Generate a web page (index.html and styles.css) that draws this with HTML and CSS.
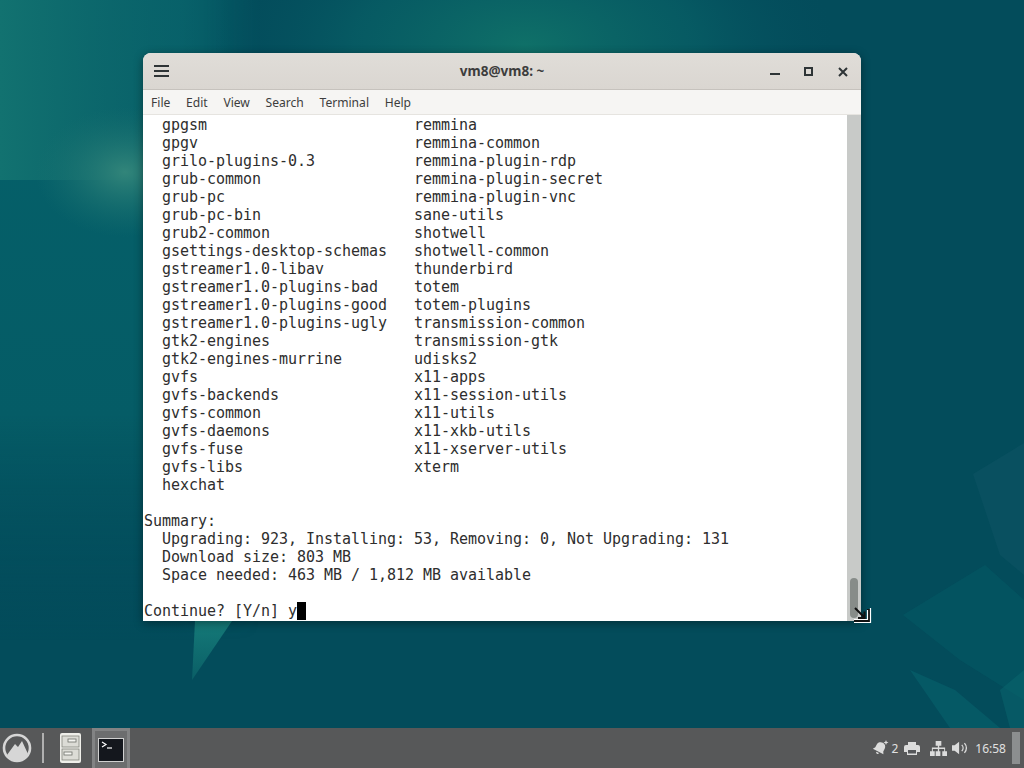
FILE: index.html
```html
<!DOCTYPE html>
<html lang="en">
<head>
<meta charset="utf-8">
<title>vm8@vm8: ~</title>
<link rel="stylesheet" href="styles.css">
</head>
<body>
<div class="desktop">
  <svg class="wallpaper" width="1024" height="728" viewBox="0 0 1024 728">
    <defs>
      <linearGradient id="leftFade" x1="0" y1="0" x2="0" y2="1">
        <stop offset="0" stop-color="#05616a"/>
        <stop offset="0.65" stop-color="#055c66"/>
        <stop offset="1" stop-color="#034c5c" stop-opacity="0"/>
      </linearGradient>
      <linearGradient id="leftSide" x1="0" y1="0" x2="1" y2="0">
        <stop offset="0" stop-color="#fff" />
        <stop offset="0.7" stop-color="#fff" />
        <stop offset="1" stop-color="#000" />
      </linearGradient>
      <mask id="leftMask"><rect width="260" height="640" fill="url(#leftSide)"/></mask>
      <linearGradient id="leftTeal" x1="0" y1="0" x2="1" y2="0">
        <stop offset="0" stop-color="#127270"/>
        <stop offset="0.8" stop-color="#0a6169" stop-opacity=".55"/>
        <stop offset="1" stop-color="#0a6169" stop-opacity="0"/>
      </linearGradient>
      <radialGradient id="topGlow">
        <stop offset="0" stop-color="#0f7068"/>
        <stop offset="0.55" stop-color="#086066" stop-opacity=".7"/>
        <stop offset="1" stop-color="#045060" stop-opacity="0"/>
      </radialGradient>
      <radialGradient id="leftGlow">
        <stop offset="0" stop-color="#32857a"/>
        <stop offset="1" stop-color="#17706f" stop-opacity="0"/>
      </radialGradient>
      <linearGradient id="shard" x1="0" y1="0" x2="0" y2="1">
        <stop offset="0" stop-color="#157a78"/>
        <stop offset="1" stop-color="#0a5e66"/>
      </linearGradient>
    </defs>
    <rect width="1024" height="728" fill="#034c5b"/>
    <rect width="260" height="640" fill="url(#leftFade)" mask="url(#leftMask)"/>
    <rect width="230" height="180" fill="url(#leftTeal)"/>
    <ellipse cx="125" cy="172" rx="90" ry="65" fill="url(#leftGlow)"/>
    <ellipse cx="525" cy="45" rx="310" ry="160" fill="url(#topGlow)"/>
    <polygon points="973,474 1024,443 1024,575 1000,555" fill="#0e5464" opacity=".55"/>
    <polygon points="903,615 985,565 1024,600 1024,700 960,660" fill="#05606a" opacity=".4"/>
    <polygon points="910,670 955,690 1000,728 950,728" fill="#086670" opacity=".5"/>
    <polygon points="1000,690 1024,670 1024,728 1010,728" fill="#0a6a70" opacity=".45"/>
    <polygon points="195,621 232,621 192,680" fill="url(#shard)"/>
  </svg>

  <section class="window">
    <header class="titlebar">
      <span class="hamburger"><i></i><i></i><i></i></span>
      <h1 class="title">vm8@vm8: ~</h1>
      <div class="controls">
        <svg width="14" height="14" viewBox="0 0 14 14"><rect x="2" y="8" width="10" height="2" fill="#2e3436"/></svg>
        <svg width="14" height="14" viewBox="0 0 14 14"><rect x="3" y="3" width="7" height="7" fill="none" stroke="#2e3436" stroke-width="2"/></svg>
        <svg width="14" height="14" viewBox="0 0 14 14"><path d="M3 3l8 8M11 3l-8 8" stroke="#2e3436" stroke-width="2"/></svg>
      </div>
    </header>
    <nav class="menubar">
      <span>File</span><span>Edit</span><span>View</span><span>Search</span><span>Terminal</span><span>Help</span>
    </nav>
    <div class="terminal">
      <pre class="output">  gpgsm                       remmina
  gpgv                        remmina-common
  grilo-plugins-0.3           remmina-plugin-rdp
  grub-common                 remmina-plugin-secret
  grub-pc                     remmina-plugin-vnc
  grub-pc-bin                 sane-utils
  grub2-common                shotwell
  gsettings-desktop-schemas   shotwell-common
  gstreamer1.0-libav          thunderbird
  gstreamer1.0-plugins-bad    totem
  gstreamer1.0-plugins-good   totem-plugins
  gstreamer1.0-plugins-ugly   transmission-common
  gtk2-engines                transmission-gtk
  gtk2-engines-murrine        udisks2
  gvfs                        x11-apps
  gvfs-backends               x11-session-utils
  gvfs-common                 x11-utils
  gvfs-daemons                x11-xkb-utils
  gvfs-fuse                   x11-xserver-utils
  gvfs-libs                   xterm
  hexchat

Summary:
  Upgrading: 923, Installing: 53, Removing: 0, Not Upgrading: 131
  Download size: 803 MB
  Space needed: 463 MB / 1,812 MB available

Continue? [Y/n] y<b class="cursor"></b></pre>
      <div class="scrollbar"><div class="thumb"></div></div>
    </div>
  </section>

  <svg class="resize-cursor" width="20" height="20" viewBox="0 0 20 20">
    <path d="M2 15H17V3" fill="none" stroke="#111" stroke-width="4"/>
    <path d="M2 16.500H18.500V2" fill="none" stroke="#fff" stroke-width="1.200"/>
    <path d="M2 13.500H15.500V4" fill="none" stroke="#fff" stroke-width="1.200"/>
    <path d="M3 2l9.500 9.500M12.500 5.500v6.500H6" fill="none" stroke="#111" stroke-width="2"/>
  </svg>
</div>

<footer class="panel">
  <div class="launchers">
    <svg class="logo" width="30" height="30" viewBox="0 0 30 30">
      <circle cx="15" cy="15" r="13" fill="none" stroke="#d6d6d6" stroke-width="2.600"/>
      <path d="M5 22l8-11 3 3 4-6 6 13a12 12 0 0 1-21 1z" fill="#d6d6d6"/>
    </svg>
    <span class="divider"></span>
    <svg class="launcher" width="24" height="30" viewBox="0 0 24 30">
      <rect x="1" y="0" width="21" height="30" rx="2" fill="#efefea"/>
      <rect x="3" y="3" width="17" height="11" fill="#dcdcd6" stroke="#85877f" stroke-width=".8"/>
      <rect x="9" y="6" width="8" height="3" fill="#f5f5f1" stroke="#6d6f6a" stroke-width=".8"/>
      <rect x="3" y="16" width="17" height="11" fill="#dcdcd6" stroke="#85877f" stroke-width=".8"/>
      <rect x="5" y="19" width="8" height="3" fill="#f5f5f1" stroke="#6d6f6a" stroke-width=".8"/>
    </svg>
    <div class="task-active">
      <svg width="26" height="24" viewBox="0 0 26 24">
        <rect x=".5" y=".5" width="25" height="23" fill="#14171d" stroke="#d0d0d0"/>
        <path d="M4 4l4 2.500-4 2.500" fill="none" stroke="#fff" stroke-width="1.200"/>
        <path d="M9 10h5" stroke="#fff" stroke-width="1.200"/>
      </svg>
    </div>
  </div>
  <div class="tray">
    <svg class="tray-bell" width="17" height="16" viewBox="0 0 17 16"><g transform="rotate(28 8 8)"><path d="M8 2a4.500 4.500 0 0 0-4.500 4.500v3L2 12h12l-1.500-2.500v-3A4.500 4.500 0 0 0 8 2zM6.500 13a1.500 1.500 0 0 0 3 0z" fill="#dcdcdc"/></g><path d="M14 0l.7 1.800 1.800.7-1.800.7-.7 1.800-.7-1.800-1.800-.7 1.800-.7z" fill="#dcdcdc"/></svg>
    <span class="count">2</span>
    <svg class="tray-printer" width="16" height="15" viewBox="0 0 16 15"><path d="M4 4V1h8v3h2a2 2 0 0 1 2 2v5h-3v3H3v-3H0V6a2 2 0 0 1 2-2z" fill="#dcdcdc"/><rect x="4" y="9" width="8" height="3.500" fill="#55575a"/></svg>
    <svg class="tray-network" width="17" height="17" viewBox="0 0 18 18"><path d="M6 1h6v5H9.700v2H16v4h2v5h-5v-5h2V9.500H9.700V12H11v5H6v-5h2.300V9.500H3V12h2v5H0v-5h2V8h6.300V6H6z" fill="#dcdcdc"/></svg>
    <svg class="tray-volume" width="16" height="16" viewBox="0 0 18 16"><path d="M0 5h3l5-4v14l-5-4H0z" fill="#dcdcdc"/><path d="M11 4.500a5 5 0 0 1 0 7M14 2.500a8 8 0 0 1 0 11" fill="none" stroke="#dcdcdc" stroke-width="1.500"/></svg>
    <span class="clock">16:58</span>
    <span class="show-desktop"></span>
  </div>
</footer>
</body>
</html>
```
FILE: styles.css
```css
html, body {
  margin: 0;
  padding: 0;
  width: 1024px;
  height: 768px;
  overflow: hidden;
  background: #034c5b;
}
body {
  display: flex;
  flex-direction: column;
  font-family: "Noto Sans", "Liberation Sans", sans-serif;
}
.desktop {
  position: relative;
  height: 728px;
  flex: none;
}
.wallpaper {
  position: absolute;
  inset: 0;
  display: block;
}
.window {
  position: absolute;
  left: 143px;
  top: 53px;
  width: 718px;
  height: 568px;
  display: flex;
  flex-direction: column;
  background: #f6f5f3;
  border-radius: 8px 8px 0 0;
  overflow: hidden;
  box-shadow: 0 2px 10px rgba(0, 0, 0, .4);
}
.titlebar {
  height: 36px;
  flex: none;
  display: flex;
  align-items: center;
  position: relative;
  background: linear-gradient(#e0ddd8, #dad6d1);
  border-bottom: 1px solid #c6c2bd;
}
.hamburger {
  display: flex;
  flex-direction: column;
  gap: 3px;
  margin-left: 11px;
}
.hamburger i {
  display: block;
  width: 15px;
  height: 2px;
  background: #2e3436;
}
.title {
  position: absolute;
  left: 0;
  right: 0;
  margin: 0;
  text-align: center;
  font-size: 13.500px;
  font-weight: 700;
  color: #3d3d3d;
}
.controls {
  margin: 1px 11px 0 auto;
  display: flex;
  gap: 20px;
}
.controls svg {
  display: block;
}
.menubar {
  height: 24px;
  flex: none;
  display: flex;
  align-items: center;
  gap: 15.700px;
  padding-left: 8px;
  background: #f6f5f3;
  border-bottom: 1px solid #e6e4e0;
  font-size: 12.100px;
  color: #3d3d3d;
}
.terminal {
  flex: 1;
  display: flex;
  min-height: 0;
  background: #fff;
}
.output {
  flex: 1;
  margin: 0;
  padding: 1px 0 0 1px;
  font-family: "DejaVu Sans Mono", monospace;
  font-size: 15px;
  letter-spacing: -0.030px;
  line-height: 18px;
  color: #2e2e2e;
}
.cursor {
  display: inline-block;
  width: 9px;
  height: 18px;
  background: #000;
  vertical-align: top;
}
.scrollbar {
  width: 14px;
  flex: none;
  background: #c8cac8;
  position: relative;
}
.thumb {
  position: absolute;
  left: 3px;
  right: 3px;
  bottom: 3px;
  height: 40px;
  border-radius: 4px;
  background: #878c89;
}
.resize-cursor {
  position: absolute;
  left: 852px;
  top: 606px;
}
.panel {
  height: 40px;
  flex: none;
  display: flex;
  align-items: center;
  justify-content: space-between;
  background: #575859;
}
.launchers {
  display: flex;
  align-items: center;
  height: 100%;
  padding-left: 2px;
}
.logo {
  display: block;
}
.divider {
  width: 2px;
  height: 30px;
  margin: 0 15px 0 10px;
  background: #b0b0b0;
}
.launcher {
  display: block;
  margin-right: 9px;
}
.task-active {
  box-sizing: border-box;
  width: 38px;
  height: 40px;
  display: flex;
  align-items: center;
  justify-content: center;
  background: #6c6d6e;
  border: 3px solid #828384;
  border-bottom: 0;
}
.tray {
  display: flex;
  align-items: center;
  height: 100%;
  color: #dcdcdc;
}
.count, .clock {
  font-size: 12px;
  color: #e0e0e0;
}
.tray-bell {
  margin-right: 2px;
}
.tray-printer {
  margin-left: 6px;
}
.tray-network {
  margin-left: 10px;
}
.tray-volume {
  margin-left: 5px;
}
.clock {
  margin-left: 7px;
}
.show-desktop {
  width: 8px;
  height: 32px;
  margin: 0 4px 0 6px;
  background: #8c8e8f;
}
```
